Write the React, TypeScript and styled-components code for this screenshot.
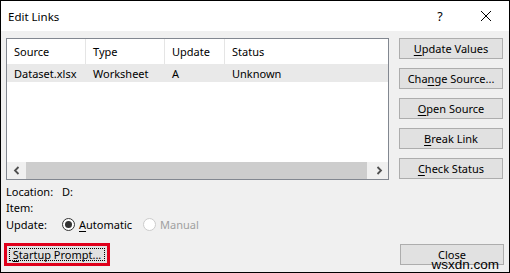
import React from "react";
import styled, { createGlobalStyle } from "styled-components";

const Global = createGlobalStyle`
  html, body { margin: 0; padding: 0; background: #f0f0f0; }
  * { box-sizing: border-box; }
`;

const Window = styled.div`
  position: relative;
  width: 510px;
  height: 273px;
  border: 1px solid #000;
  background: #f0f0f0;
  font-family: "Segoe UI", "Noto Sans", sans-serif;
  font-size: 11px;
  color: #000;
  display: flex;
  flex-direction: column;
  overflow: hidden;
`;

const TitleBar = styled.div`
  height: 30px;
  background: #fff;
  display: flex;
  align-items: center;
  padding-left: 7px;
  flex-shrink: 0;
`;

const Title = styled.div`
  flex: 1;
  font-size: 11.5px;
`;

const TitleBtn = styled.div<{ $w: number }>`
  width: ${(p) => p.$w}px;
  height: 30px;
  display: flex;
  align-items: center;
  justify-content: center;
  font-size: 12.5px;
`;

const Body = styled.div`
  flex: 1;
  padding: 7px 5px 6px 5px;
  display: flex;
  flex-direction: column;
`;

const TopRow = styled.div`
  display: flex;
  gap: 10px;
`;

const ListBox = styled.div`
  width: 383px;
  height: 142px;
  border: 1px solid #828790;
  background: #fff;
  display: flex;
  flex-direction: column;
`;

const Grid = styled.div`
  flex: 1;
`;

const Row = styled.div<{ $header?: boolean }>`
  display: grid;
  grid-template-columns: 79px 79px 60px 1fr;
  height: ${(p) => (p.$header ? 25 : 18)}px;
  background: ${(p) => (p.$header ? "#fff" : "#e9e9e9")};
`;

const Cell = styled.div<{ $header?: boolean; $last?: boolean }>`
  padding-left: 7px;
  display: flex;
  align-items: center;
  border-right: ${(p) => (p.$header && !p.$last ? "1px solid #e5e5e5" : "none")};
  white-space: nowrap;
`;

const HScroll = styled.div`
  height: 17px;
  display: flex;
  background: #f0f0f0;
`;

const ScrollArrow = styled.div`
  width: 19px;
  display: flex;
  align-items: center;
  justify-content: center;
`;

const ScrollTrack = styled.div`
  flex: 1;
  display: flex;
`;

const Thumb = styled.div`
  flex: 1;
  background: #cdcdcd;
  margin-right: 2px;
`;

const ButtonCol = styled.div`
  display: flex;
  flex-direction: column;
  gap: 9px;
`;

const Button = styled.button<{ $focus?: boolean; $h?: number; $bare?: boolean }>`
  position: relative;
  width: ${(p) => (p.$bare ? 100 : 104)}px;
  height: ${(p) => p.$h ?? 21}px;
  border: ${(p) => (p.$bare ? "none" : "1px solid #adadad")};
  background: #e1e1e1;
  font-family: inherit;
  font-size: 11px;
  color: #000;
  padding: 0;
  display: flex;
  align-items: center;
  justify-content: center;
  outline: ${(p) => (p.$focus ? "1px dotted #000" : "none")};
  outline-offset: -3px;
`;

const U = styled.span`
  text-decoration: underline;
  text-underline-offset: 2px;
`;

const Info = styled.div`
  display: flex;
  flex-direction: column;
  margin-top: 3px;
`;

const InfoLine = styled.div`
  height: 16.5px;
  display: flex;
  align-items: center;
`;

const Label = styled.div`
  width: 56px;
  flex-shrink: 0;
`;

const Radio = styled.label<{ $disabled?: boolean }>`
  display: flex;
  align-items: center;
  gap: 4px;
  margin-right: 11px;
  color: ${(p) => (p.$disabled ? "#a0a0a0" : "#000")};
`;

const Circle = styled.span<{ $on?: boolean; $disabled?: boolean }>`
  width: 13px;
  height: 13px;
  border-radius: 50%;
  border: 1px solid ${(p) => (p.$disabled ? "#cccccc" : "#333")};
  background: #fff;
  display: flex;
  align-items: center;
  justify-content: center;
  &::after {
    content: "";
    display: ${(p) => (p.$on ? "block" : "none")};
    width: 7px;
    height: 7px;
    border-radius: 50%;
    background: #333;
  }
`;

const BottomRow = styled.div`
  display: flex;
  justify-content: space-between;
  align-items: center;
  margin-top: auto;
`;

const Highlight = styled.div`
  border: 3px solid #e0001b;
  margin-left: -2px;
`;

const Watermark = styled.div`
  position: absolute;
  right: 10px;
  bottom: 1px;
  font-family: "Liberation Sans", Arial, sans-serif;
  font-size: 13.5px;
  color: #000;
  line-height: 1;
`;

const Chevron = ({ left }: { left?: boolean }) => (
  <svg width="8" height="9" viewBox="0 0 8 9">
    <path
      d={left ? "M5.5 1 L2 4.5 L5.5 8" : "M2.5 1 L6 4.5 L2.5 8"}
      stroke="#505050"
      strokeWidth="1.8"
      fill="none"
    />
  </svg>
);

const CloseX = () => (
  <svg width="12" height="12" viewBox="0 0 12 12">
    <path d="M1 1 L11 11 M11 1 L1 11" stroke="#000" strokeWidth="1" />
  </svg>
);

export default function App() {
  return (
    <>
      <Global />
      <Window>
        <TitleBar>
          <Title>Edit Links</Title>
          <TitleBtn $w={46}>?</TitleBtn>
          <TitleBtn $w={46}>
            <CloseX />
          </TitleBtn>
        </TitleBar>
        <Body>
          <TopRow>
            <ListBox>
              <Grid>
                <Row $header>
                  <Cell $header>Source</Cell>
                  <Cell $header>Type</Cell>
                  <Cell $header>Update</Cell>
                  <Cell $header $last>
                    Status
                  </Cell>
                </Row>
                <Row>
                  <Cell>Dataset.xlsx</Cell>
                  <Cell>Worksheet</Cell>
                  <Cell>A</Cell>
                  <Cell>Unknown</Cell>
                </Row>
              </Grid>
              <HScroll>
                <ScrollArrow>
                  <Chevron left />
                </ScrollArrow>
                <ScrollTrack>
                  <Thumb />
                </ScrollTrack>
                <ScrollArrow>
                  <Chevron />
                </ScrollArrow>
              </HScroll>
            </ListBox>
            <ButtonCol>
              <Button>
                <span>
                  <U>U</U>pdate Values
                </span>
              </Button>
              <Button>
                <span>
                  Cha<U>n</U>ge Source...
                </span>
              </Button>
              <Button>
                <span>
                  <U>O</U>pen Source
                </span>
              </Button>
              <Button>
                <span>
                  <U>B</U>reak Link
                </span>
              </Button>
              <Button>
                <span>
                  <U>C</U>heck Status
                </span>
              </Button>
            </ButtonCol>
          </TopRow>
          <Info>
            <InfoLine>
              <Label>Location:</Label>D:
            </InfoLine>
            <InfoLine>
              <Label>Item:</Label>
            </InfoLine>
            <InfoLine>
              <Label>Update:</Label>
              <Radio>
                <Circle $on />
                <span>
                  <U>A</U>utomatic
                </span>
              </Radio>
              <Radio $disabled>
                <Circle $disabled />
                <span>Manual</span>
              </Radio>
            </InfoLine>
          </Info>
          <BottomRow>
            <Highlight>
              <Button $focus $bare $h={17}>
                <span>
                  <U>S</U>tartup Prompt...
                </span>
              </Button>
            </Highlight>
            <Button>Close</Button>
          </BottomRow>
        </Body>
        <Watermark>wsxdn.com</Watermark>
      </Window>
    </>
  );
}
